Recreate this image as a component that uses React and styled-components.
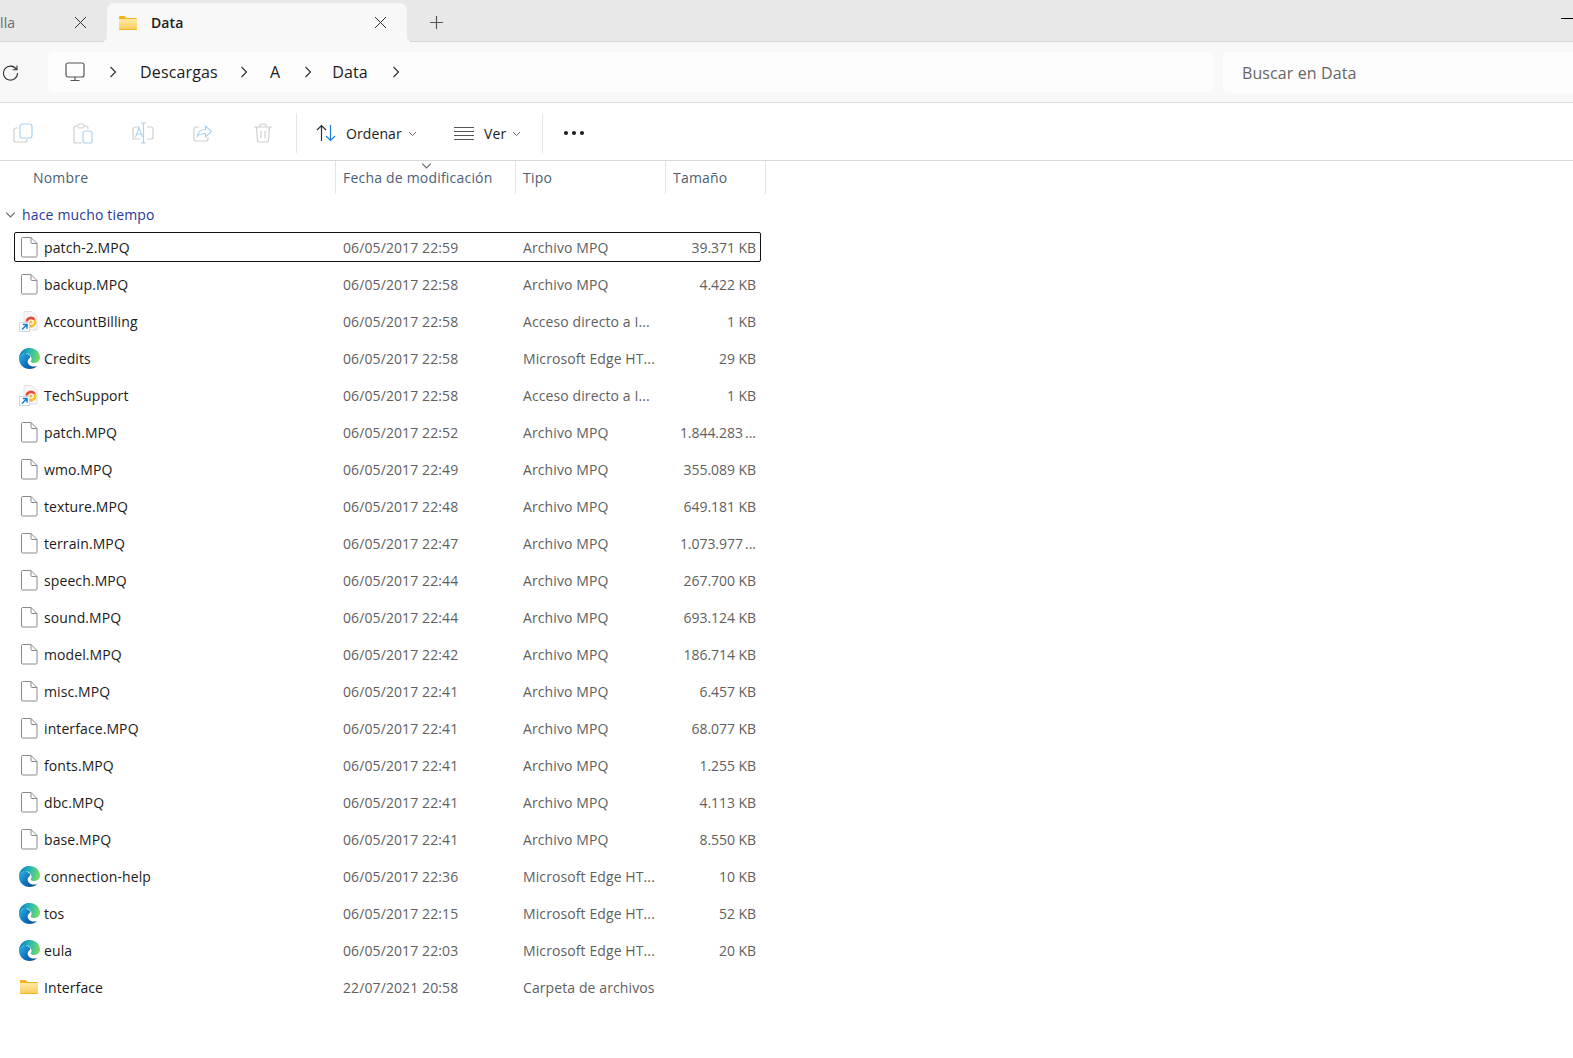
import React from "react";
import styled, { createGlobalStyle } from "styled-components";

const FONT = `"Open Sans", "Noto Sans", "Liberation Sans", sans-serif`;

const FILES = [
  ["patch-2.MPQ", "06/05/2017 22:59", "Archivo MPQ", "39.371 KB", "file"],
  ["backup.MPQ", "06/05/2017 22:58", "Archivo MPQ", "4.422 KB", "file"],
  ["AccountBilling", "06/05/2017 22:58", "Acceso directo a I...", "1 KB", "link"],
  ["Credits", "06/05/2017 22:58", "Microsoft Edge HT...", "29 KB", "edge"],
  ["TechSupport", "06/05/2017 22:58", "Acceso directo a I...", "1 KB", "link"],
  ["patch.MPQ", "06/05/2017 22:52", "Archivo MPQ", "1.844.283\u2009...", "file"],
  ["wmo.MPQ", "06/05/2017 22:49", "Archivo MPQ", "355.089 KB", "file"],
  ["texture.MPQ", "06/05/2017 22:48", "Archivo MPQ", "649.181 KB", "file"],
  ["terrain.MPQ", "06/05/2017 22:47", "Archivo MPQ", "1.073.977\u2009...", "file"],
  ["speech.MPQ", "06/05/2017 22:44", "Archivo MPQ", "267.700 KB", "file"],
  ["sound.MPQ", "06/05/2017 22:44", "Archivo MPQ", "693.124 KB", "file"],
  ["model.MPQ", "06/05/2017 22:42", "Archivo MPQ", "186.714 KB", "file"],
  ["misc.MPQ", "06/05/2017 22:41", "Archivo MPQ", "6.457 KB", "file"],
  ["interface.MPQ", "06/05/2017 22:41", "Archivo MPQ", "68.077 KB", "file"],
  ["fonts.MPQ", "06/05/2017 22:41", "Archivo MPQ", "1.255 KB", "file"],
  ["dbc.MPQ", "06/05/2017 22:41", "Archivo MPQ", "4.113 KB", "file"],
  ["base.MPQ", "06/05/2017 22:41", "Archivo MPQ", "8.550 KB", "file"],
  ["connection-help", "06/05/2017 22:36", "Microsoft Edge HT...", "10 KB", "edge"],
  ["tos", "06/05/2017 22:15", "Microsoft Edge HT...", "52 KB", "edge"],
  ["eula", "06/05/2017 22:03", "Microsoft Edge HT...", "20 KB", "edge"],
  ["Interface", "22/07/2021 20:58", "Carpeta de archivos", "", "folder"],
];

const FileIcon = () => (
  <svg width="18" height="21" viewBox="0 0 18 21" fill="none">
    <path d="M1.5 1.5a1 1 0 0 1 1-1H11L17 6.5V19a1 1 0 0 1-1 1H2.500a1 1 0 0 1-1-1Z" fill="#fff" stroke="#8a8a8a" />
    <path d="M11 .5V5.500a1 1 0 0 0 1 1H17" stroke="#8a8a8a" />
  </svg>
);

const FolderIcon = ({ width = 18, height = 14 }) => (
  <svg width={width} height={height} viewBox="0 0 18 14">
    <defs>
      <linearGradient id="folderFill" x1="0" y1="0" x2="0" y2="1">
        <stop offset="0" stopColor="#ffe9a6" />
        <stop offset="1" stopColor="#fbcf5f" />
      </linearGradient>
    </defs>
    <path d="M0 1a1 1 0 0 1 1-1h4.500L7.500 2H17a1 1 0 0 1 1 1v10a1 1 0 0 1-1 1H1a1 1 0 0 1-1-1Z" fill="#f5b21b" />
    <rect x="0" y="3" width="18" height="10" fill="url(#folderFill)" />
  </svg>
);

const EdgeIcon = () => (
  <svg width="21" height="21" viewBox="0 0 24 24">
    <defs>
      <linearGradient id="edgeBlue" x1="0" y1="0.3" x2="0.8" y2="1">
        <stop offset="0" stopColor="#27b3e6" />
        <stop offset="0.6" stopColor="#0f6db8" />
        <stop offset="1" stopColor="#0b4f94" />
      </linearGradient>
      <linearGradient id="edgeGreen" x1="0" y1="0.4" x2="1" y2="0.6">
        <stop offset="0" stopColor="#0c7fbd" />
        <stop offset="0.5" stopColor="#2dbbb0" />
        <stop offset="1" stopColor="#7ddc5e" />
      </linearGradient>
    </defs>
    <path d="M12 0C5.500 0 0 5.300 0 12c0 6.800 5.300 12 12 12 3.500 0 6.500-1.200 9-3.500-3.500 1.200-8 .8-10-2-1.500-2-1.500-4.500 0-6 1-1 2-2 2-3.500L7 5 .5 10Z" fill="url(#edgeBlue)" />
    <path d="M12 0c7 0 12 5 12 11 0 3.500-3 6-7 6-2.200 0-3.700-.6-3.700-1.600 0-.7 1-1 1-3C14.300 9 11 6 7.500 6 4 6 1.500 8 0 11 .8 5 5.500 0 12 0Z" fill="url(#edgeGreen)" />
  </svg>
);

const LinkIcon = () => (
  <svg width="21" height="21" viewBox="0 0 21 21">
    <path d="M5 .5h8L18 5.500V19H5Z" fill="#f6f6f6" stroke="#e2e2e2" />
    <path d="M6.500 11a5.500 5.500 0 0 1 10.300-2.600L12 9.500Z" fill="#e8483a" />
    <path d="M16.800 8.400a5.500 5.500 0 0 1-3.800 8L12 9.500Z" fill="#f7c325" />
    <path d="M13 16.400a5.500 5.500 0 0 1-6.500-5.400L12 9.500Z" fill="#e8a24a" />
    <circle cx="12" cy="11" r="2.800" fill="#fff" />
    <circle cx="12" cy="11" r="1.600" fill="#f0b93a" />
    <rect x="0.500" y="11.500" width="10" height="9" fill="#fff" stroke="#c9d9ee" />
    <path d="M3 18.500l4.500-4.500M3.800 13.500h4.200v4.200" fill="none" stroke="#1679d4" strokeWidth="1.500" />
  </svg>
);

const ROW_ICONS = { file: FileIcon, folder: FolderIcon, edge: EdgeIcon, link: LinkIcon };

const Cross = () => (
  <svg width="13" height="13" viewBox="0 0 13 13" stroke="#333" fill="none">
    <path d="M1 1l11 11M12 1L1 12" />
  </svg>
);

const Caret = ({ size = 9 }) => (
  <svg width={size} height={size} viewBox="0 0 9 9" fill="none" stroke="#6a6a6a">
    <path d="M1 3l3.500 3.500L8 3" />
  </svg>
);

const Crumb = () => (
  <svg width="8" height="12" viewBox="0 0 8 12" fill="none" stroke="#333" strokeWidth="1.200">
    <path d="M1.500 1l5 5-5 5" />
  </svg>
);

const GlobalStyle = createGlobalStyle`
  html, body {
    margin: 0;
    height: 100%;
    overflow: hidden;
    background: #fff;
  }
  body {
    font-family: ${FONT};
  }
`;

const Page = styled.div`
  width: 1573px;
  height: 1058px;
  overflow: hidden;
  background: #fff;
`;

const TabStrip = styled.div`
  display: flex;
  align-items: flex-end;
  padding-top: 3px;
  height: 38px;
  background: #e8e8e8;
  border-bottom: 1px solid #d6d6d6;
`;

const IdleTab = styled.div`
  display: flex;
  align-items: center;
  justify-content: space-between;
  width: 107px;
  height: 38px;
  padding-right: 20px;
  box-sizing: border-box;
  font-size: 14px;
  letter-spacing: 0.1px;
  color: #6d6d6d;
`;

const ActiveTab = styled.div`
  position: relative;
  display: flex;
  align-items: center;
  width: 300px;
  height: 39px;
  margin-bottom: -1px;
  padding: 0 20px 0 12px;
  box-sizing: border-box;
  background: #f8f8f8;
  border-radius: 8px 8px 0 0;

  &::before,
  &::after {
    content: "";
    position: absolute;
    bottom: 0;
    width: 6px;
    height: 6px;
  }
  &::before {
    left: -6px;
    background: radial-gradient(circle at 0 0, transparent 6px, #f8f8f8 6.500px);
  }
  &::after {
    right: -6px;
    background: radial-gradient(circle at 100% 0, transparent 6px, #f8f8f8 6.500px);
  }
`;

const TabTitle = styled.span`
  flex: 1;
  margin-left: 14px;
  font-size: 14px;
  font-weight: 600;
  letter-spacing: 0.1px;
  color: #1b1b1b;
`;

const NewTab = styled.span`
  display: flex;
  align-self: center;
  margin: 1px 0 0 23px;
`;

const Minimize = styled.span`
  align-self: center;
  width: 12px;
  height: 1px;
  margin: -8px 0 0 auto;
  background: #000;
`;

const AddressBar = styled.div`
  display: flex;
  align-items: center;
  height: 60px;
  background: #f8f8f8;
  border-bottom: 1px solid #d9d9d9;
`;

const Refresh = styled.span`
  display: flex;
  width: 48px;
  padding-left: 2px;
  box-sizing: border-box;
`;

const PathBox = styled.div`
  display: flex;
  align-items: center;
  width: 1165px;
  height: 40px;
  padding-left: 17px;
  box-sizing: border-box;
  background: #fdfdfd;
  border-radius: 5px;
`;

const PathText = styled.span`
  margin-left: ${(p) => p.$gap}px;
  margin-right: ${(p) => p.$after}px;
  font-size: 16px;
  letter-spacing: 0.15px;
  color: #1b1b1b;
`;

const SearchBox = styled.div`
  display: flex;
  align-items: center;
  flex: 1;
  height: 41px;
  margin-left: 10px;
  padding: 1px 0 0 19px;
  box-sizing: border-box;
  background: #fdfdfd;
  border-radius: 5px 0 0 5px;
  font-size: 16px;
  letter-spacing: 0.1px;
  color: #666;
`;

const Toolbar = styled.div`
  display: flex;
  align-items: center;
  height: 57px;
  margin-left: -7px;
  padding-top: 3px;
  box-sizing: border-box;
  background: #fff;
`;

const ToolButton = styled.span`
  display: flex;
  align-items: center;
  justify-content: center;
  width: 60px;
`;

const Divider = styled.span`
  width: 1px;
  height: 40px;
  margin: 0 ${(p) => p.$after || 0}px 0 ${(p) => p.$before || 0}px;
  background: #e6e6e6;
`;

const ToolAction = styled.span`
  display: flex;
  align-items: center;
  width: ${(p) => p.$width}px;
  font-size: 14px;
  letter-spacing: 0.1px;
  color: #1b1b1b;
`;

const ActionLabel = styled.span`
  margin: 0 6px 0 ${(p) => p.$gap}px;
`;

const Dots = styled.span`
  display: flex;
  gap: 4px;
  margin-left: 21px;
`;

const Dot = styled.i`
  width: 4px;
  height: 4px;
  border-radius: 50%;
  background: #1b1b1b;
`;

const HeaderRow = styled.div`
  display: flex;
  height: 33px;
  border-top: 1px solid #d9d9d9;
`;

const HeaderCell = styled.div`
  position: relative;
  display: flex;
  align-items: center;
  width: ${(p) => p.$width}px;
  padding-left: ${(p) => p.$pad}px;
  box-sizing: border-box;
  border-right: 1px solid #e5e5e5;
  font-size: 14px;
  letter-spacing: 0.2px;
  color: #4c5f75;
`;

const SortMark = styled.span`
  position: absolute;
  top: -1px;
  left: 85px;
  display: flex;
`;

const GroupRow = styled.div`
  display: flex;
  align-items: center;
  height: 31px;
  margin: 5px 0 2px;
  padding-left: 5px;
  font-size: 14px;
  letter-spacing: 0.17px;
  color: #26399a;
`;

const GroupCaret = styled.span`
  display: flex;
  margin-right: 6px;
`;

const Rows = styled.div`
  display: flex;
  flex-direction: column;
  gap: 7px;
  margin-left: 14px;
  width: 747px;
`;

const Row = styled.div`
  display: grid;
  grid-template-columns: 329px 180px 142px 1fr;
  align-items: center;
  height: 30px;
  padding-right: 5px;
  box-sizing: border-box;
  font-size: 14px;
  letter-spacing: 0.1px;
  white-space: nowrap;
  color: #5f5f5f;
  border-radius: 2px;
  outline: ${(p) => (p.$focused ? "1px solid #111" : "none")};
  outline-offset: -1px;
`;

const NameCell = styled.div`
  display: flex;
  align-items: center;
  color: #1b1b1b;
`;

const RowIcon = styled.span`
  display: flex;
  justify-content: center;
  width: 30px;
  box-sizing: border-box;
`;

const SizeCell = styled.div`
  text-align: right;
  letter-spacing: -0.05px;
`;

export default function App() {
  return (
    <Page>
      <GlobalStyle />
      <TabStrip>
        <IdleTab>
          <span>lla</span>
          <Cross />
        </IdleTab>
        <ActiveTab>
          <FolderIcon />
          <TabTitle>Data</TabTitle>
          <Cross />
        </ActiveTab>
        <NewTab>
          <svg width="13" height="13" viewBox="0 0 13 13" stroke="#555" strokeWidth="1.200">
            <path d="M6.500 0v13M0 6.500h13" />
          </svg>
        </NewTab>
        <Minimize />
      </TabStrip>

      <AddressBar>
        <Refresh>
          <svg width="17" height="17" viewBox="0 0 17 17" fill="none" stroke="#333" strokeWidth="1.100">
            <path d="M14.500 5.500A7 7 0 1 0 15.500 9M15 1.500v4.300h-4.300" />
          </svg>
        </Refresh>
        <PathBox>
          <svg width="20" height="20" viewBox="0 0 20 20" fill="none" stroke="#555" strokeWidth="1.200">
            <rect x="1" y="1" width="18" height="14" rx="2" />
            <path d="M10 15v3M5.500 18.500h9" />
          </svg>
          <PathText $gap={24} $after={0}>
            <Crumb />
          </PathText>
          <PathText $gap={23} $after={22}>Descargas</PathText>
          <Crumb />
          <PathText $gap={22} $after={24}>A</PathText>
          <Crumb />
          <PathText $gap={20} $after={24}>Data</PathText>
          <Crumb />
        </PathBox>
        <SearchBox>Buscar en Data</SearchBox>
      </AddressBar>

      <Toolbar>
        <ToolButton>
          <svg width="20" height="20" viewBox="0 0 20 20" fill="none">
            <path d="M5 5H3a2 2 0 0 0-2 2v10a2 2 0 0 0 2 2h9a2 2 0 0 0 2-2v-1" stroke="#cfcfcf" strokeWidth="1.200" />
            <rect x="7" y="1" width="12" height="14" rx="2.500" fill="#fff" stroke="#a8d2f4" strokeWidth="1.200" />
          </svg>
        </ToolButton>
        <ToolButton>
          <svg width="20" height="21" viewBox="0 0 20 21" fill="none">
            <path d="M5 3H3a2 2 0 0 0-2 2v13a2 2 0 0 0 2 2h6M15 6V5a2 2 0 0 0-2-2h-2" stroke="#cfcfcf" strokeWidth="1.200" />
            <rect x="5" y="1" width="6" height="4" rx="1" fill="#fff" stroke="#cfcfcf" />
            <rect x="10" y="8" width="9" height="12" rx="2" fill="#fff" stroke="#a8d2f4" strokeWidth="1.200" />
          </svg>
        </ToolButton>
        <ToolButton>
          <svg width="22" height="22" viewBox="0 0 22 22" fill="none">
            <path d="M8 5H3a2 2 0 0 0-2 2v8a2 2 0 0 0 2 2h5M15 5h4a2 2 0 0 1 2 2v8a2 2 0 0 1-2 2h-4" stroke="#cfcfcf" strokeWidth="1.200" />
            <path d="M11.500 1v20M9 1h5M9 21h5" stroke="#a8d2f4" strokeWidth="1.200" />
            <path d="M3.500 15L7 6l3.500 9M4.800 12h4.400" stroke="#a8d2f4" strokeWidth="1.100" />
          </svg>
        </ToolButton>
        <ToolButton>
          <svg width="20" height="20" viewBox="0 0 20 20" fill="none">
            <path d="M6 4H3a2 2 0 0 0-2 2v10a2 2 0 0 0 2 2h10a2 2 0 0 0 2-2v-2" stroke="#cfcfcf" strokeWidth="1.200" />
            <path d="M4.500 13c.5-4 3.500-6.500 8-6.500V3l6 5.500-6 5.500v-3.500C9 10.500 6.500 11 4.500 13Z" fill="#fff" stroke="#a8d2f4" strokeWidth="1.200" />
          </svg>
        </ToolButton>
        <ToolButton>
          <svg width="18" height="20" viewBox="0 0 18 20" fill="none" stroke="#cfcfcf" strokeWidth="1.200">
            <path d="M0 4h18M6 4V2.500A1.500 1.500 0 0 1 7.500 1h3A1.500 1.500 0 0 1 12 2.500V4M2.500 4l1 13.500A1.500 1.500 0 0 0 5 19h8a1.500 1.500 0 0 0 1.500-1.500l1-13.500M7 8v7M11 8v7" />
          </svg>
        </ToolButton>
        <Divider $before={3} $after={19} />
        <ToolAction $width={138}>
          <svg width="20" height="18" viewBox="0 0 20 18" fill="none" strokeWidth="1.200">
            <path d="M5.500 17V1.500M1 6l4.500-4.500L10 6" stroke="#333" />
            <path d="M14.500 1v15.500M10 12l4.500 4.500L19 12" stroke="#1b7fd6" />
          </svg>
          <ActionLabel $gap={10}>Ordenar</ActionLabel>
          <Caret />
        </ToolAction>
        <ToolAction $width={88}>
          <svg width="20" height="13" viewBox="0 0 20 13" stroke="#555">
            <path d="M0 .5h20M0 4.500h20M0 8.500h20M0 12.500h20" />
          </svg>
          <ActionLabel $gap={10}>Ver</ActionLabel>
          <Caret />
        </ToolAction>
        <Divider />
        <Dots>
          <Dot />
          <Dot />
          <Dot />
        </Dots>
      </Toolbar>

      <HeaderRow>
        <HeaderCell $width={336} $pad={33}>Nombre</HeaderCell>
        <HeaderCell $width={180} $pad={7}>
          <SortMark>
            <Caret size={11} />
          </SortMark>
          Fecha de modificación
        </HeaderCell>
        <HeaderCell $width={150} $pad={7}>Tipo</HeaderCell>
        <HeaderCell $width={100} $pad={7}>Tamaño</HeaderCell>
      </HeaderRow>

      <GroupRow>
        <GroupCaret>
          <Caret size={11} />
        </GroupCaret>
        hace mucho tiempo
      </GroupRow>

      <Rows>
        {FILES.map(([name, date, type, size, kind], i) => {
          const Icon = ROW_ICONS[kind];
          return (
            <Row key={name} $focused={i === 0}>
              <NameCell>
                <RowIcon>
                  <Icon />
                </RowIcon>
                {name}
              </NameCell>
              <div>{date}</div>
              <div>{type}</div>
              <SizeCell>{size}</SizeCell>
            </Row>
          );
        })}
      </Rows>
    </Page>
  );
}
